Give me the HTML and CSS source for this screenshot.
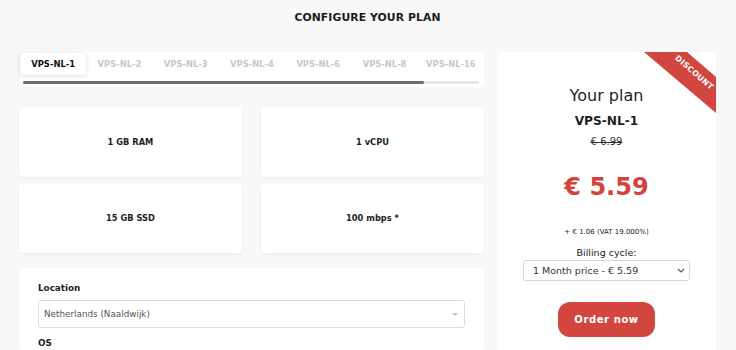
FILE: index.html
```html
<!DOCTYPE html>
<html>
<head>
<meta charset="utf-8">
<link rel="stylesheet" href="styles.css">
</head>
<body>
<div class="page">
  <h1 class="title">CONFIGURE YOUR PLAN</h1>
  <div class="row">
    <div class="left">
      <div class="tabs-panel">
        <div class="tabs">
          <div class="tab active">VPS-NL-1</div>
          <div class="tab">VPS-NL-2</div>
          <div class="tab">VPS-NL-3</div>
          <div class="tab">VPS-NL-4</div>
          <div class="tab">VPS-NL-6</div>
          <div class="tab">VPS-NL-8</div>
          <div class="tab">VPS-NL-16</div>
        </div>
        <div class="track"><div class="track-fill"></div></div>
      </div>
      <div class="features">
        <div class="feature">1 GB RAM</div>
        <div class="feature">1 vCPU</div>
        <div class="feature">15 GB SSD</div>
        <div class="feature">100 mbps *</div>
      </div>
      <div class="options">
        <div class="label">Location</div>
        <div class="select">
          <span>Netherlands (Naaldwijk)</span>
          <span class="caret"></span>
        </div>
        <div class="label os">OS</div>
      </div>
    </div>
    <div class="plan">
      <div class="ribbon"><span>DISCOUNT</span></div>
      <div class="plan-heading">Your plan</div>
      <div class="plan-name">VPS-NL-1</div>
      <div class="old-price">€ 6.99</div>
      <div class="price">€ 5.59</div>
      <div class="vat">+ € 1.06 (VAT 19.000%)</div>
      <div class="billing-label">Billing cycle:</div>
      <div class="billing-select">
        <span>1 Month price - € 5.59</span>
        <svg class="chev" width="8" height="5" viewBox="0 0 8 5"><path d="M1 1l3 3 3-3" fill="none" stroke="#555" stroke-width="1.1"/></svg>
      </div>
      <div class="order">Order now</div>
    </div>
  </div>
</div>
</body>
</html>
```
FILE: styles.css
```css
* { box-sizing: border-box; }
html, body { margin: 0; padding: 0; }
body {
  background: #f8f8f8;
  font-family: "DejaVu Sans", "Noto Sans", sans-serif;
  color: #222;
  width: 736px;
  height: 350px;
  overflow: hidden;
}
.page { padding: 10px 20px 0 19px; }
.title {
  margin: 0 0 26px 0;
  font-size: 10.8px;
  line-height: 16px;
  font-weight: bold;
  text-align: center;
  color: #1c1c1c;
  letter-spacing: 0.1px;
}
.row { display: flex; gap: 13px; align-items: flex-start; }
.left { width: 465px; display: flex; flex-direction: column; }

.tabs-panel {
  margin-left: 1px;
  height: 35px;
  background: #fff;
  border-radius: 5px;
  padding-top: 1px;
}
.tabs { display: flex; height: 22px; }
.tab {
  flex: 1;
  display: flex;
  align-items: center;
  justify-content: center;
  font-size: 8.4px;
  font-weight: bold;
  color: #c8c8c8;
  border-radius: 4px;
  white-space: nowrap;
}
.tab.active {
  color: #111;
  background: #fff;
  box-shadow: 0 1px 4px rgba(0,0,0,0.15);
}
.track {
  margin: 6px 5px 0 3px;
  height: 3px;
  background: #e6e6e6;
  border-radius: 2px;
}
.track-fill {
  width: 401px;
  height: 3px;
  background: #6e6e6e;
  border-radius: 2px;
}

.features {
  margin-top: 20px;
  display: grid;
  grid-template-columns: 1fr 1fr;
  column-gap: 19px;
  row-gap: 6px;
}
.feature {
  height: 70px;
  background: #fff;
  border-radius: 4px;
  box-shadow: 0 1px 3px rgba(0,0,0,0.06);
  display: flex;
  align-items: center;
  justify-content: center;
  font-size: 8.3px;
  font-weight: bold;
  color: #1e1e1e;
}

.options {
  margin-top: 15px;
  background: #fff;
  border-radius: 4px;
  padding: 14px 19px 0 19px;
  height: 82px;
}
.label {
  font-size: 8.8px;
  font-weight: bold;
  line-height: 13px;
  color: #1e1e1e;
}
.select {
  margin-top: 5px;
  height: 28px;
  border: 1px solid #dcdcdc;
  border-radius: 3px;
  display: flex;
  align-items: center;
  justify-content: space-between;
  padding: 0 6px 0 5px;
  font-size: 8.8px;
  color: #555;
}
.caret {
  width: 0; height: 0;
  border-left: 3px solid transparent;
  border-right: 3px solid transparent;
  border-top: 3px solid #c4c4c4;
}
.os { margin-top: 9px; }

.plan {
  position: relative;
  overflow: hidden;
  width: 219px;
  height: 298px;
  background: #fff;
  border-radius: 5px 5px 0 0;
  padding-top: 33px;
  display: flex;
  flex-direction: column;
  align-items: center;
  text-align: center;
}
.ribbon {
  position: absolute;
  top: 0;
  right: 0;
  width: 72px;
  height: 61px;
  background: #d2463f;
  clip-path: polygon(0 0, 43px 0, 100% 25px, 100% 100%);
}
.ribbon span {
  position: absolute;
  left: 18px;
  top: 15px;
  width: 64px;
  line-height: 12px;
  text-align: center;
  transform: rotate(41deg);
  transform-origin: center;
  font-size: 7.8px;
  font-weight: bold;
  color: #fff;
  letter-spacing: 0.3px;
}
.plan-heading { font-size: 16px; line-height: 22px; color: #1e1e1e; }
.plan-name { margin-top: 4px; font-size: 12.2px; line-height: 20px; font-weight: bold; color: #1e1e1e; }
.old-price {
  margin-top: 4px;
  font-size: 10px;
  line-height: 14px;
  color: #333;
  text-decoration: line-through;
}
.price {
  margin-top: 22px;
  font-size: 24px;
  line-height: 32px;
  font-weight: bold;
  color: #d3433b;
}
.vat { margin-top: 23px; font-size: 7px; line-height: 12px; color: #222; }
.billing-label { margin-top: 8px; font-size: 9.5px; line-height: 13px; color: #222; }
.billing-select {
  margin-top: 1px;
  width: 167px;
  height: 21px;
  border: 1px solid #d6d6d6;
  border-radius: 3px;
  display: flex;
  align-items: center;
  justify-content: space-between;
  padding: 0 4px 0 9px;
  font-size: 9.5px;
  color: #333;
}
.order {
  margin-top: 21px;
  width: 97px;
  height: 35px;
  border-radius: 12px;
  background: #d3463f;
  color: #fff;
  font-size: 10px;
  font-weight: bold;
  letter-spacing: 0.6px;
  display: flex;
  align-items: center;
  justify-content: center;
}
```
